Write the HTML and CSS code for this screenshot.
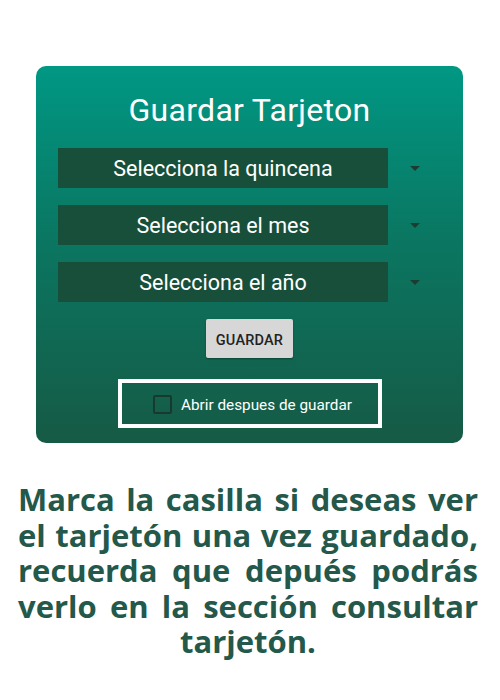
FILE: index.html
```html
<!DOCTYPE html>
<html>
<head>
<meta charset="utf-8">
<link rel="stylesheet" href="styles.css">
</head>
<body>
<div class="page">
  <div class="card">
    <h1 class="title">Guardar Tarjeton</h1>
    <div class="row">
      <div class="select">Selecciona la quincena</div>
      <div class="arrow"></div>
    </div>
    <div class="row">
      <div class="select">Selecciona el mes</div>
      <div class="arrow"></div>
    </div>
    <div class="row">
      <div class="select">Selecciona el año</div>
      <div class="arrow"></div>
    </div>
    <div class="btn-wrap"><button class="btn">GUARDAR</button></div>
    <div class="check-box">
      <span class="check"></span>
      <span class="check-label">Abrir despues de guardar</span>
    </div>
  </div>
  <p class="note">Marca la casilla si deseas ver el tarjetón una vez guardado, recuerda que depués podrás verlo en la sección consultar tarjetón.</p>
</div>
</body>
</html>
```
FILE: styles.css
```css
html, body { margin: 0; padding: 0; background: #ffffff; }
.page { width: 500px; height: 700px; padding-top: 66px; box-sizing: border-box; }
.card {
  margin-left: 36px; width: 427px; height: 377px; box-sizing: border-box;
  border-radius: 10px;
  background: linear-gradient(to bottom, #009884 0%, #0a7762 45%, #165a45 100%);
  padding-top: 26px;
  font-family: Roboto, "Liberation Sans", sans-serif;
}
.title {
  margin: 0; height: 56px; text-align: center; color: #fff;
  font-weight: 400; font-size: 32px; line-height: 36px;
  letter-spacing: 0.3px;
}
.row { display: flex; align-items: center; margin-left: 22px; height: 40px; margin-bottom: 17px; }
.select {
  width: 330px; height: 40px; background: #174f3b; color: #fff;
  font-size: 21.5px; line-height: 42px; text-align: center;
}
.arrow {
  margin-left: 22px; width: 0; height: 0;
  border-left: 5px solid transparent; border-right: 5px solid transparent;
  border-top: 5px solid #1d3c31;
}
.btn-wrap { display: flex; justify-content: center; }
.btn {
  width: 87px; height: 39px; border: none; border-radius: 2px;
  background: #d7d7d7; color: #222; font-family: Roboto, "Liberation Sans", sans-serif;
  font-size: 14.5px; font-weight: 500; letter-spacing: 0.2px;
  box-shadow: 0 1px 2px rgba(0,0,0,0.35); padding: 3px 0 0 0;
}
.check-box {
  margin-top: 21px; margin-left: 82px; width: 264px; height: 49px; box-sizing: border-box;
  border: 4px solid #fff; display: flex; align-items: center; padding-left: 31px;
}
.check {
  width: 15px; height: 15px; border: 2px solid #183a2e; border-radius: 2px; display: block; flex: none;
  margin-top: 2px;
}
.check-label { color: #fff; font-size: 15.3px; margin-left: 9px; padding-top: 3px; }
.note {
  margin: 39px 22px 0 18px; color: #23584a;
  font-family: "Open Sans", "Liberation Sans", sans-serif; font-weight: 700;
  font-size: 31px; line-height: 35.5px; text-align: justify; text-align-last: center;
}
```
